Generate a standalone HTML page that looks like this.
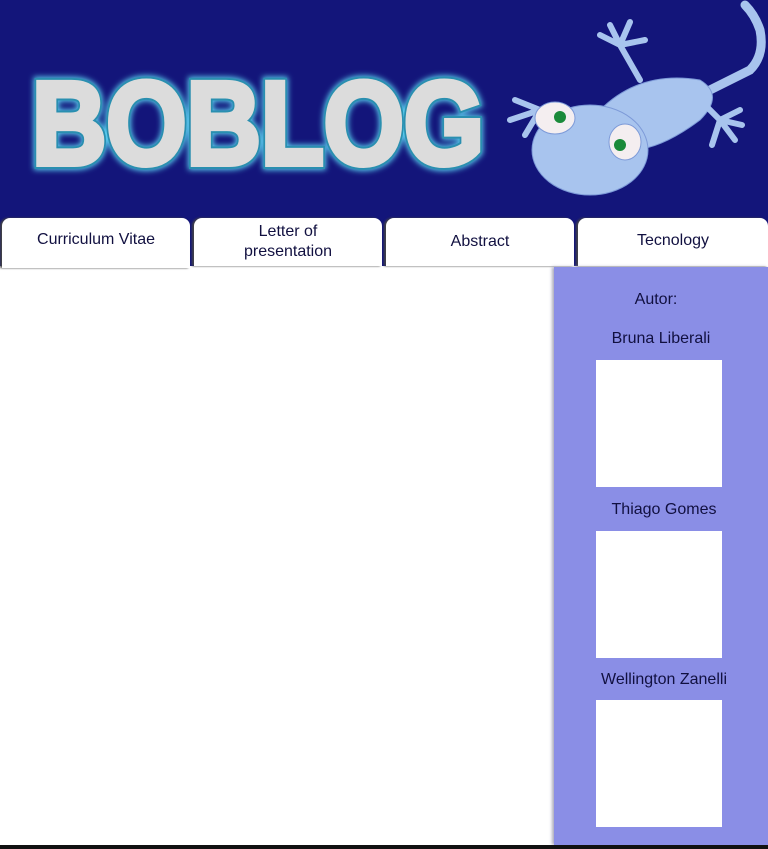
<!DOCTYPE html>
<html><head><meta charset="utf-8"><style>
body{margin:0;width:768px;height:849px;overflow:hidden;background:#13157a;font-family:"Liberation Sans",sans-serif;position:relative}
.tab{position:absolute;top:218px;height:48px;background:#fff;border-radius:8px 8px 0 0;color:#111040;font-size:16px;text-align:center;display:flex;align-items:center;justify-content:center;line-height:20px;box-shadow:-2px 0 2px #444}
.main{position:absolute;left:0;top:266px;width:768px;height:579px;background:#fff}
.side{position:absolute;left:554px;top:267px;width:214px;height:578px;background:#8a8ee6;box-shadow:-2px 0 3px #aab}
.lbl{position:absolute;width:214px;text-align:center;color:#111040;font-size:16px}
.box{position:absolute;left:42px;width:126px;height:127px;background:#fff}
.bottom{position:absolute;left:0;top:845px;width:768px;height:4px;background:#111}
</style></head><body>
<svg width="768" height="215" style="position:absolute;left:0;top:0">
<defs><filter id="g"><feGaussianBlur stdDeviation="3"/></filter></defs>
<text x="32" y="164" font-family="Liberation Sans" font-weight="bold" font-size="118" textLength="452" lengthAdjust="spacingAndGlyphs" fill="#5ad0f0" stroke="#5ad0f0" stroke-width="12" filter="url(#g)">BOBLOG</text>
<text x="32" y="164" font-family="Liberation Sans" font-weight="bold" font-size="118" textLength="452" lengthAdjust="spacingAndGlyphs" fill="#e4e4e4" stroke="#2a8fb0" stroke-width="10" paint-order="stroke">BOBLOG</text>
<text x="32" y="164" font-family="Liberation Sans" font-weight="bold" font-size="118" textLength="452" lengthAdjust="spacingAndGlyphs" fill="#dcdcdc" stroke="#dcdcdc" stroke-width="6">BOBLOG</text>
<g fill="#a8c4ee" stroke="#7d9ad8" stroke-width="1">
<path d="M700 95 Q730 80 750 70 Q765 55 760 30 Q755 15 745 5" fill="none" stroke="#a8c4ee" stroke-width="9" stroke-linecap="round"/>
<path d="M600 110 Q640 70 700 80 Q725 95 700 120 Q660 150 630 150 Z"/>
<path d="M640 80 L620 45 M620 45 L600 35 M620 45 L610 25 M620 45 L630 22 M620 45 L645 40" fill="none" stroke="#a8c4ee" stroke-width="6" stroke-linecap="round"/>
<path d="M700 100 L720 120 M720 120 L740 110 M720 120 L735 140 M720 120 L712 145 M720 120 L742 125" fill="none" stroke="#a8c4ee" stroke-width="6" stroke-linecap="round"/>
<path d="M540 110 L515 100 M540 110 L510 120 M540 110 L525 135" fill="none" stroke="#a8c4ee" stroke-width="6" stroke-linecap="round"/>
<ellipse cx="590" cy="150" rx="58" ry="45"/>
<ellipse cx="555" cy="118" rx="20" ry="16" fill="#f4eef0"/>
<ellipse cx="625" cy="142" rx="16" ry="18" fill="#f4eef0"/>
</g>
<circle cx="560" cy="117" r="6" fill="#1a8a3a"/><circle cx="620" cy="145" r="6" fill="#1a8a3a"/>
</svg>
<div class="main"></div>
<div class="tab" style="left:2px;width:188px;top:218px;height:50px;align-items:flex-start;padding-top:0"><span style="margin-top:12px">Curriculum Vitae</span></div>
<div class="tab" style="left:194px;width:188px">Letter of<br>presentation</div>
<div class="tab" style="left:386px;width:188px">Abstract</div>
<div class="tab" style="left:578px;width:190px;align-items:flex-start"><span style="margin-top:13px">Tecnology</span></div>
<div class="side">
<div class="lbl" style="top:24px;left:-5px">Autor:</div>
<div class="lbl" style="top:63px">Bruna Liberali</div>
<div class="box" style="top:93px"></div>
<div class="lbl" style="top:234px;left:3px">Thiago Gomes</div>
<div class="box" style="top:264px"></div>
<div class="lbl" style="top:404px;left:3px">Wellington Zanelli</div>
<div class="box" style="top:433px"></div>
</div>
<div class="bottom"></div>
</body></html>
